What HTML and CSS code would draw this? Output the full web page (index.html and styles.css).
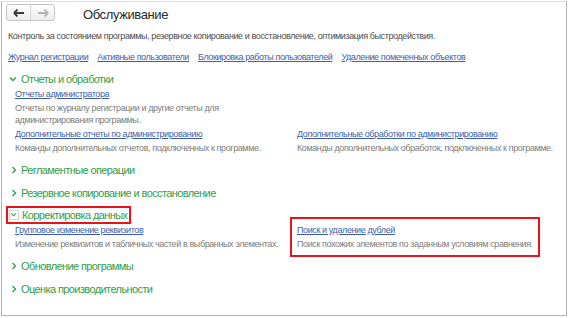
FILE: index.html
```html
<!DOCTYPE html>
<html lang="ru">
<head>
  <meta charset="UTF-8">
  <link rel="stylesheet" href="styles.css">
  <title>Обслуживание</title>
</head>
<body>
  <div class="frame">
    <div class="toolbar">
      <div class="nav">
        <span class="nav-btn">
          <svg width="12" height="8" viewBox="0 0 12 8"><path d="M1 4h10M1 4l3.5-3.5M1 4l3.5 3.5" stroke="#3c3c3c" stroke-width="1.8" fill="none"/></svg>
        </span>
        <span class="nav-btn">
          <svg width="12" height="8" viewBox="0 0 12 8"><path d="M11 4H1M11 4L7.5 0.5M11 4L7.5 7.5" stroke="#b5b5b5" stroke-width="1.8" fill="none"/></svg>
        </span>
      </div>
      <h1 class="title">Обслуживание</h1>
    </div>

    <p class="lead">Контроль за состоянием программы, резервное копирование и восстановление, оптимизация быстродействия.</p>

    <div class="quick">
      <a href="#">Журнал регистрации</a>
      <a href="#">Активные пользователи</a>
      <a href="#">Блокировка работы пользователей</a>
      <a href="#">Удаление помеченных объектов</a>
    </div>

    <div class="group open">
      <div class="group-head">
        <svg class="chev" width="8" height="8" viewBox="0 0 8 8"><path d="M0 2.5l3 3 3-3" stroke="#2e9d49" stroke-width="1.3" fill="none"/></svg>
        Отчеты и обработки
      </div>
      <div class="items">
        <div class="item">
          <a href="#">Отчеты администратора</a>
          <p>Отчеты по журналу регистрации и другие отчеты для<br>администрирования программы.</p>
        </div>
        <div class="item"></div>
        <div class="item">
          <a href="#">Дополнительные отчеты по администрированию</a>
          <p>Команды дополнительных отчетов, подключенных к программе.</p>
        </div>
        <div class="item">
          <a href="#">Дополнительные обработки по администрированию</a>
          <p>Команды дополнительных обработок, подключенных к программе.</p>
        </div>
      </div>
    </div>

    <div class="group">
      <div class="group-head">
        <svg class="chev" width="8" height="8" viewBox="0 0 8 8"><path d="M2.5 1l3 3-3 3" stroke="#2e9d49" stroke-width="1.3" fill="none"/></svg>
        Регламентные операции
      </div>
    </div>

    <div class="group">
      <div class="group-head">
        <svg class="chev" width="8" height="8" viewBox="0 0 8 8"><path d="M2.5 1l3 3-3 3" stroke="#2e9d49" stroke-width="1.3" fill="none"/></svg>
        Резервное копирование и восстановление
      </div>
    </div>

    <div class="group open">
      <div class="group-head marked">
        <svg class="chev boxed" width="10" height="10" viewBox="0 0 10 10"><path d="M1.5 3l3 3 3-3" stroke="#2e9d49" stroke-width="1.3" fill="none"/></svg>
        Корректировка данных
      </div>
      <div class="items">
        <div class="item">
          <a href="#">Групповое изменение реквизитов</a>
          <p>Изменение реквизитов и табличных частей в выбранных элементах.</p>
        </div>
        <div class="item marked-item">
          <a href="#">Поиск и удаление дублей</a>
          <p>Поиск похожих элементов по заданным условиям сравнения.</p>
        </div>
      </div>
    </div>

    <div class="group">
      <div class="group-head">
        <svg class="chev" width="8" height="8" viewBox="0 0 8 8"><path d="M2.5 1l3 3-3 3" stroke="#2e9d49" stroke-width="1.3" fill="none"/></svg>
        Обновление программы
      </div>
    </div>

    <div class="group">
      <div class="group-head">
        <svg class="chev" width="8" height="8" viewBox="0 0 8 8"><path d="M2.5 1l3 3-3 3" stroke="#2e9d49" stroke-width="1.3" fill="none"/></svg>
        Оценка производительности
      </div>
    </div>
  </div>
</body>
</html>
```

FILE: styles.css
```css
*{
  margin: 0;
  padding: 0;
  box-sizing: border-box;
}
body{
  background: #fff;
  font-family: "Liberation Sans", Arial, sans-serif;
  color: #4a4a4a;
}
.frame{
  margin: 1px 0 0 1px;
  width: 566px;
  height: 315px;
  border: 1px solid #b4b4b4;
  border-top-color: #dcdcdc;
}
.toolbar{
  display: flex;
  align-items: center;
  padding: 2px 0 0 4px;
  height: 19px;
}
.nav{
  display: flex;
  width: 49px;
  height: 17px;
  border: 1px solid #c6c6c6;
  border-radius: 3px;
  background: linear-gradient(#ffffff, #ececec);
}
.nav-btn{
  flex: 1;
  display: flex;
  align-items: center;
  justify-content: center;
}
.nav-btn + .nav-btn{
  border-left: 1px solid #d6d6d6;
}
.title{
  margin-left: 28px;
  padding-top: 4px;
  font-size: 13px;
  letter-spacing: -0.4px;
  font-weight: normal;
  color: #2b2b2b;
}
.lead{
  margin-top: 9px;
  padding-left: 6px;
  font-size: 9px;
  letter-spacing: -0.4px;
  line-height: 12px;
  color: #4d4d4d;
}
.quick{
  display: flex;
  gap: 9px;
  margin-top: 9px;
  padding-left: 6px;
}
a{
  font-size: 9px;
  letter-spacing: -0.4px;
  line-height: 12px;
  color: #3d5fab;
  text-decoration: underline;
}
.group{
  margin-top: 4.5px;
}
.quick + .group,
.open + .group{
  margin-top: 7px;
}
.group-head{
  display: flex;
  align-items: center;
  gap: 3px;
  width: fit-content;
  margin-left: 6px;
  padding: 0 2px;
  height: 18px;
  font-size: 11px;
  letter-spacing: -0.6px;
  color: #2f9e4b;
}
.chev.boxed{
  border: 1px solid #d4d4d4;
}
.marked{
  margin-left: 4px;
  padding: 0 4px 0 3px;
  outline: 2px solid #e8141b;
  outline-offset: -2px;
}
.items{
  display: grid;
  grid-template-columns: 282px 1fr;
  row-gap: 2px;
  padding-left: 13px;
}
.item a{
  display: block;
  line-height: 13px;
}
.item p{
  margin-top: 1px;
  font-size: 9px;
  letter-spacing: -0.4px;
  line-height: 12px;
  color: #807c77;
}
.marked-item{
  justify-self: start;
  outline: 2px solid #e8141b;
  outline-offset: 5px;
}
```
